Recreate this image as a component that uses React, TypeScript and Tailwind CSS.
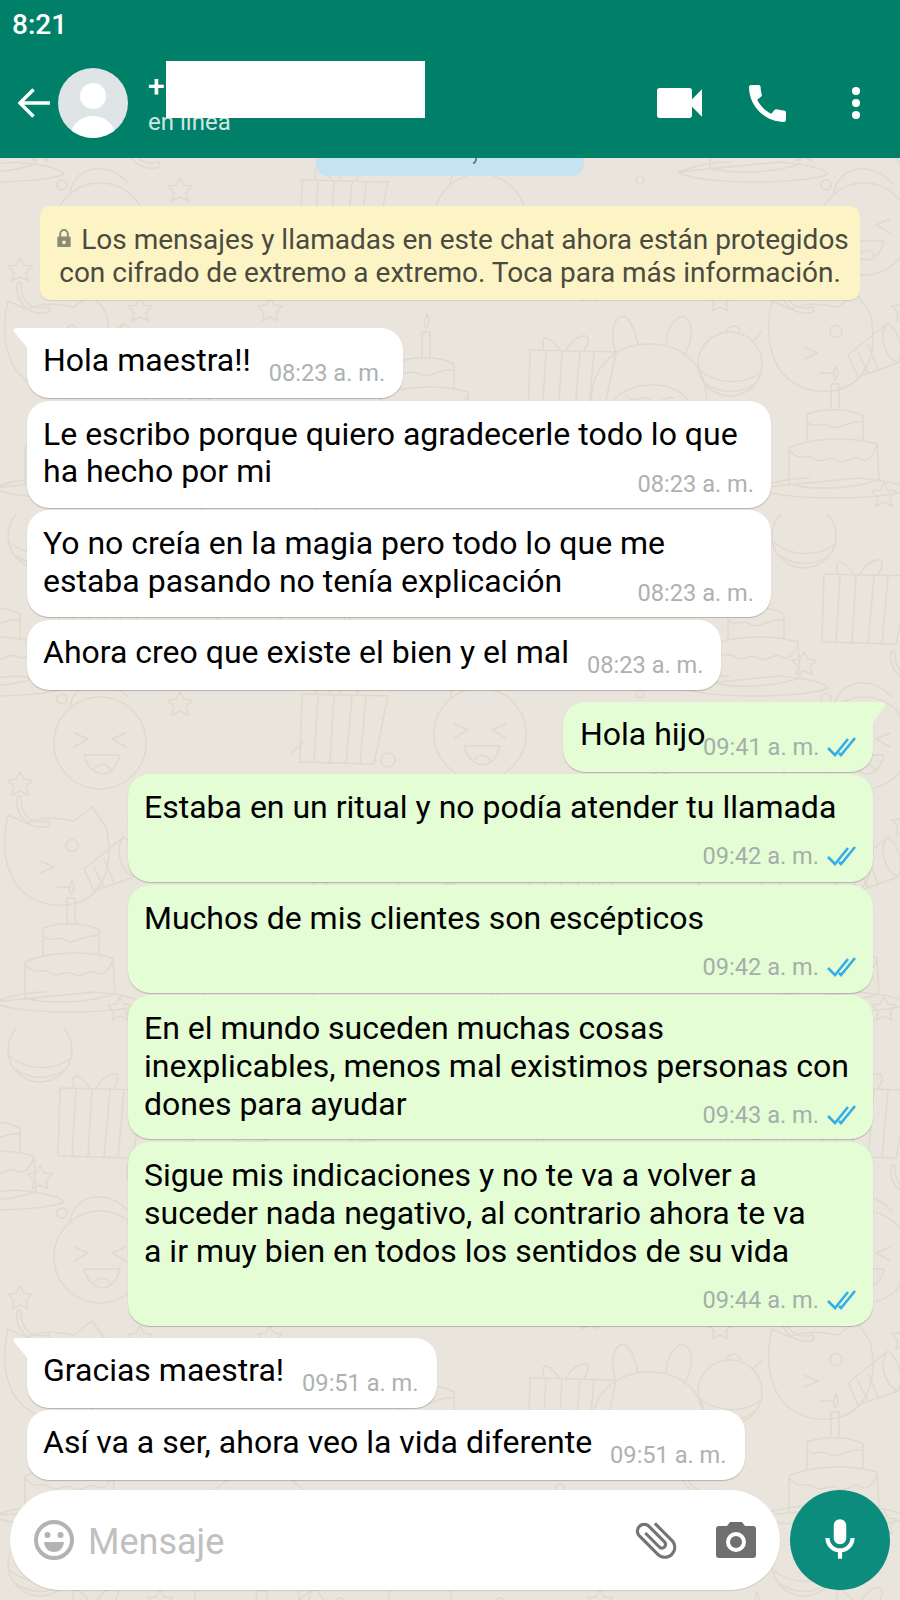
function Doodles() {
  return (
    <svg className="absolute inset-0 h-full w-full" xmlns="http://www.w3.org/2000/svg">
      <defs>
        <path id="star" d="M0-12 4-5 12-4 6 3 8 11 0 7-8 11-6 3-12-4-4-5Z" />
        <path id="moon" d="M-14-10C-14 8-2 16 14 12 16 16 14 18 10 18-6 20-20 6-18-10-18-14-14-14-14-10Z" />
        <g id="cake">
          <path d="M-72 36C-50 28-30 26-20 26M30 26C50 28 75 32 78 38 60 48-50 50-72 36Z" />
          <path d="M-40 32V-4C-20-14 20-16 48-8L50 28C20 38-20 38-40 32Z" />
          <path d="M-40-2C-30 10-24 2-16 6-8 14 0 2 8 8 16 14 24 2 30 6 38 12 44 4 48-6" />
          <path d="M-22-10V-38C-6-44 20-44 34-36V-12" />
          <path d="M-22-30C-14-22-8-32 0-26 8-20 18-32 34-30" />
          <path d="M2-44V-68H10V-44M6-72C2-76 6-82 7-86 10-80 10-76 6-72Z" />
        </g>
        <g id="gift">
          <path d="M-40-30-42 38 32 40 46-28Z" />
          <path d="M-24-28-28 38M-8-28-12 38M10-28 4 40M24-28 18 40" />
          <path d="M-10-30C-24-48-30-44-26-30M-4-30C10-52 26-46 14-30" />
          <circle cx="46" cy="36" r="7" />
        </g>
        <g id="planet">
          <circle r="32" />
          <path d="M-31 6C-14 20 14 22 31 8M-24 20C-8 30 10 30 24 20" />
          <path d="M-4-32C0-40 8-40 10-32M24-24 32-32" />
        </g>
        <g id="cat">
          <path d="M-52-46C-60-12-56 36-8 44 40 48 56 10 46-34L32-54 14-40C-4-44-20-44-34-38Z" />
          <path d="M-20 0-6 6-20 12M18-16A6 6 0 1 0 18-15M-4 26H10" />
          <path d="M24 8 64-24C76-14 80 4 74 16L34 30Z" />
          <path d="M34 6 44 26M44-2 54 22M64-24C54-14 60 10 74 16" />
        </g>
        <g id="face">
          <circle r="46" />
          <path d="M-30-36C-26-62 6-70 28-46M-26-10-12-4-26 4M26-10 12-4 26 4M-16 12C-10 36 14 38 20 12Z" />
          <path d="M-6 26C-2 20 6 20 10 26" />
        </g>
        <g id="bunny">
          <path d="M-58 44C-64-6-32-26 0-26 32-26 62-4 56 44" />
          <path d="M-34-16C-44-48-28-62-20-48-14-38-14-30-12-26M16-26C18-50 34-62 40-46 44-34 38-22 34-14" />
          <path d="M-36 30C-22 12 22 8 38 30M-24 26C-14 36-8 22 0 30 8 38 14 24 24 28" />
        </g>
        <g id="tile" fill="none" stroke="#dfd9ce" strokeWidth="1.5" strokeLinecap="round" strokeLinejoin="round">
          <use href="#face" x="100" y="229" />
          <use href="#cat" x="60" y="347" />
          <use href="#cake" x="65" y="452" />
          <use href="#planet" x="40" y="22" />
          <use href="#gift" x="100" y="90" />
          <use href="#cake" x="-14" y="136" />
          <use href="#cake" x="750" y="136" />
          <use href="#gift" x="570" y="380" />
          <use href="#bunny" x="650" y="370" />
          <use href="#planet" x="730" y="364" />
          <use href="#gift" x="342" y="210" />
          <use href="#face" x="480" y="220" />
          <use href="#cat" x="250" y="70" />
          <use href="#bunny" x="260" y="470" />
          <use href="#planet" x="420" y="60" />
          <use href="#cake" x="420" y="400" />
          <use href="#star" x="160" y="60" />
          <use href="#star" x="40" y="150" />
          <use href="#star" x="140" y="310" />
          <use href="#star" x="180" y="190" />
          <use href="#star" x="120" y="495" />
          <use href="#star" x="270" y="310" />
          <use href="#star" x="320" y="360" />
          <use href="#star" x="430" y="130" />
          <use href="#star" x="600" y="60" />
          <use href="#star" x="660" y="250" />
          <use href="#star" x="720" y="300" />
          <use href="#star" x="540" y="120" />
          <use href="#star" x="20" y="270" />
          <use href="#star" x="590" y="290" />
          <use href="#star" x="200" y="400" />
          <use href="#moon" x="145" y="150" />
          <use href="#moon" x="35" y="295" />
          <use href="#moon" x="360" y="100" />
          <use href="#moon" x="610" y="225" />
          <use href="#moon" x="700" y="450" />
          <use href="#moon" x="510" y="480" />
          <circle cx="62" cy="185" r="5" />
          <circle cx="210" cy="270" r="5" />
          <circle cx="150" cy="400" r="5" />
          <circle cx="300" cy="140" r="5" />
          <circle cx="380" cy="280" r="5" />
          <circle cx="560" cy="150" r="5" />
          <circle cx="700" cy="70" r="5" />
          <circle cx="620" cy="290" r="5" />
          <circle cx="190" cy="110" r="4" />
          <circle cx="340" cy="60" r="4" />
          <circle cx="500" cy="60" r="4" />
          <circle cx="640" cy="180" r="4" />
          <circle cx="310" cy="400" r="4" />
          <circle cx="560" cy="460" r="4" />
          <path d="M470 30 482 18M215 130 230 145M640 130 655 115M290 240 304 228M230 350 240 365" />
        </g>
        <pattern id="wallpaper" x="0" y="-158" width="764" height="514" patternUnits="userSpaceOnUse">
          <use href="#tile" />
        </pattern>
      </defs>
      <rect width="100%" height="100%" fill="url(#wallpaper)" />
    </svg>
  );
}

function Ticks() {
  return (
    <svg viewBox="0 0 30 20" className="ml-[8px] h-5 w-[30px] fill-none stroke-[#35ade8] stroke-[2.6]">
      <path d="M1 11 8 18 21 2" />
      <path d="M12 16 14 18 28 1" />
    </svg>
  );
}

function Tail({ out }: { out?: boolean }) {
  if (out) {
    return (
      <svg viewBox="0 0 14 24" className="absolute right-[-13px] top-0 h-6 w-[14px] fill-[#e4fdd5]">
        <path d="M0 0H10C14 0 14 3 12 5L0 22Z" />
      </svg>
    );
  }
  return (
    <svg viewBox="0 0 16 24" className="absolute left-[-14px] top-0 h-6 w-4 fill-white">
      <path d="M16 0H4C0 0 0 3 2 5L16 22Z" />
    </svg>
  );
}

function InRow({ text, time, first, className }: { text: string; time: string; first?: boolean; className?: string }) {
  return (
    <div className={`relative flex h-[70px] w-fit items-start rounded-[22px] bg-white pl-4 pr-[18px] pt-[13px] shadow-[0_1px_1px_rgba(0,0,0,0.22)] ${first ? "rounded-tl-none" : ""} ${className ?? ""}`}>
      {first && <Tail />}
      <span className="text-[32px] leading-[38px] text-black">{text}</span>
      <span className="ml-[18px] mt-[20px] text-[23.6px] leading-[24px] text-[#aeb1b1]">{time}</span>
    </div>
  );
}

function InBlock({ lines, time }: { lines: string[]; time: string }) {
  return (
    <div className="flex h-[107px] w-[744px] flex-col rounded-[22px] bg-white pl-4 pr-[17px] pt-[15px] shadow-[0_1px_1px_rgba(0,0,0,0.22)]">
      {lines.map((line) => (
        <p key={line} className="text-[32px] leading-[37.5px] text-black">{line}</p>
      ))}
      <span className="mt-[-19px] self-end text-[23.6px] leading-[24px] text-[#aeb1b1]">{time}</span>
    </div>
  );
}

function OutBlock({ lines, time, className, timeGap }: { lines: string[]; time: string; className: string; timeGap: string }) {
  return (
    <div className={`ml-[128px] flex w-[745px] flex-col rounded-[22px] bg-[#e4fdd5] pl-4 pr-4 pt-[14px] shadow-[0_1px_1px_rgba(0,0,0,0.22)] ${className}`}>
      {lines.map((line) => (
        <p key={line} className="text-[32px] leading-[38px] text-black">{line}</p>
      ))}
      <div className={`flex items-center self-end ${timeGap}`}>
        <span className="text-[23.6px] leading-[24px] text-[#a5aeaa]">{time}</span>
        <Ticks />
      </div>
    </div>
  );
}

export default function App() {
  return (
    <div className="relative flex h-[1600px] w-[900px] flex-col overflow-hidden bg-[#e9e4dc] font-['Roboto',sans-serif]">
      <header className="relative z-10 h-[158px] shrink-0 bg-[#008069] text-white">
        <div className="px-3 pt-[9px] text-[28px] font-medium leading-[32px]">8:21</div>
        <div className="mt-[27px] flex items-center pl-[18px] pr-[40px]">
          <svg viewBox="0 0 34 32" className="h-8 w-[33px] fill-none stroke-white stroke-[3.6]">
            <path d="M33 16H3M16 2 2 16 16 30" />
          </svg>
          <div className="ml-[7px] flex h-[70px] w-[70px] shrink-0 items-center justify-center overflow-hidden rounded-full bg-[#dfe5e7]">
            <svg viewBox="0 0 70 70" className="h-[70px] w-[70px] fill-white">
              <circle cx="35" cy="28" r="13" />
              <path d="M12 70C12 56 24 48 35 48S58 56 58 70Z" />
            </svg>
          </div>
          <div className="ml-[20px] flex-1">
            <div className="mt-[-3px] text-[30px] font-medium leading-[34px]">+</div>
            <div className="mt-[7px] text-[24px] leading-[24px] text-[#cfe6e0]">en línea</div>
          </div>
          <svg viewBox="3 6 18 12" className="h-[30px] w-[47px] fill-white">
            <path d="M17 10.5V7c0-.55-.45-1-1-1H4c-.55 0-1 .45-1 1v10c0 .55.45 1 1 1h12c.55 0 1-.45 1-1v-3.5l4 4v-11l-4 4z" />
          </svg>
          <svg viewBox="3 3 18 18" className="ml-[46px] h-[37px] w-[37px] fill-white">
            <path d="M20.01 15.38c-1.23 0-2.42-.2-3.53-.56-.35-.12-.74-.03-1.01.24l-1.57 1.97c-2.83-1.35-5.48-3.9-6.89-6.83l1.95-1.66c.27-.28.35-.67.24-1.02-.37-1.11-.56-2.3-.56-3.53 0-.54-.45-.99-.99-.99H4.19C3.65 3 3 3.24 3 3.99 3 13.28 10.73 21 20.01 21c.71 0 .99-.63.99-1.18v-3.45c0-.54-.45-.99-.99-.99z" />
          </svg>
          <div className="ml-[66px] flex flex-col gap-[4px]">
            <span className="h-[8px] w-[8px] rounded-full bg-white" />
            <span className="h-[8px] w-[8px] rounded-full bg-white" />
            <span className="h-[8px] w-[8px] rounded-full bg-white" />
          </div>
        </div>
        <div className="absolute left-[166px] top-[61px] h-[57px] w-[259px] bg-white" />
      </header>

      <div className="relative flex-1">
        <Doodles />
        <main className="relative flex flex-col">
          <div className="mx-auto flex h-[18px] w-[268px] justify-center rounded-b-[12px] bg-[#c6e3f2]">
            <svg viewBox="0 0 6 6" className="ml-[50px] h-[6px] w-[6px] fill-none stroke-[#666] stroke-[1.6]">
              <path d="M4 0C4 3 3 5 1 5" />
            </svg>
          </div>
          <div className="mx-[40px] mt-[30px] h-[94px] rounded-[10px] bg-[#fdf4c5] pt-[17px] text-center text-[28px] leading-[33px] text-[#4b4a3f] shadow-[0_1px_1px_rgba(0,0,0,0.1)]">
            <svg viewBox="0 0 16 20" className="ml-[5px] mr-[9px] inline-block h-[19px] w-[16px] fill-[#8c8a78] align-[1px]">
              <path d="M3 8V5a5 5 0 0 1 10 0v3h1a1 1 0 0 1 1 1v9a1 1 0 0 1-1 1H2a1 1 0 0 1-1-1V9a1 1 0 0 1 1-1Zm2 0h6V5a3 3 0 0 0-6 0Zm3 4a2 2 0 1 0 0 4 2 2 0 0 0 0-4Z" />
            </svg>
            Los mensajes y llamadas en este chat ahora están protegidos
            <br />
            con cifrado de extremo a extremo. Toca para más información.
          </div>

          <div className="mt-[28px] flex flex-col gap-[2.5px] pl-[27px]">
            <InRow first text="Hola maestra!!" time="08:23 a. m." />
            <InBlock lines={["Le escribo porque quiero agradecerle todo lo que", "ha hecho por mi"]} time="08:23 a. m." />
            <InBlock lines={["Yo no creía en la magia pero todo lo que me", "estaba pasando no tenía explicación"]} time="08:23 a. m." />
            <InRow text="Ahora creo que existe el bien y el mal" time="08:23 a. m." />
          </div>

          <div className="mt-[12px] flex flex-col gap-[2.5px]">
            <div className="relative ml-[563px] flex h-[70px] w-[310px] items-start rounded-[22px] rounded-tr-none bg-[#e4fdd5] pl-[17px] pt-[13px] shadow-[0_1px_1px_rgba(0,0,0,0.22)]">
              <Tail out />
              <span className="w-[123px] shrink-0 whitespace-nowrap text-[32px] leading-[38px] text-black">Hola hijo</span>
              <div className="mt-[20px] flex items-center">
                <span className="text-[23.6px] leading-[24px] text-[#a5aeaa]">09:41 a. m.</span>
                <Ticks />
              </div>
            </div>
            <OutBlock className="h-[108px]" timeGap="mt-[18px]" lines={["Estaba en un ritual y no podía atender tu llamada"]} time="09:42 a. m." />
            <OutBlock className="h-[108px]" timeGap="mt-[18px]" lines={["Muchos de mis clientes son escépticos"]} time="09:42 a. m." />
            <OutBlock
              className="h-[144px]"
              timeGap="mt-[-20px]"
              lines={["En el mundo suceden muchas cosas", "inexplicables, menos mal existimos personas con", "dones para ayudar"]}
              time="09:43 a. m."
            />
            <OutBlock
              className="h-[184px]"
              timeGap="mt-[18px]"
              lines={["Sigue mis indicaciones y no te va a volver a", "suceder nada negativo, al contrario ahora te va", "a ir muy bien en todos los sentidos de su vida"]}
              time="09:44 a. m."
            />
          </div>

          <div className="mt-[12px] flex flex-col gap-[2.5px] pl-[27px]">
            <InRow first text="Gracias maestra!" time="09:51 a. m." />
            <InRow text="Así va a ser, ahora veo la vida diferente" time="09:51 a. m." />
          </div>
        </main>

        <footer className="absolute bottom-[10px] left-[10px] flex items-center gap-[10px]">
          <div className="flex h-[100px] w-[770px] items-center rounded-full bg-white pl-[24px] pr-[24px] shadow-[0_1px_1px_rgba(0,0,0,0.12)]">
            <svg viewBox="0 0 40 40" className="h-10 w-10 shrink-0">
              <circle cx="20" cy="20" r="18" fill="none" stroke="#b3b3b3" strokeWidth="4" />
              <circle cx="13.5" cy="15" r="3" fill="#b3b3b3" />
              <circle cx="26.5" cy="15" r="3" fill="#b3b3b3" />
              <path d="M10 22H30C29 29 25 32 20 32S11 29 10 22Z" fill="#b3b3b3" />
            </svg>
            <span className="ml-[14px] mt-[3px] flex-1 text-[36px] text-[#c0c0c0]">Mensaje</span>
            <svg viewBox="0 0 24 24" className="h-[50px] w-[50px] -rotate-45 fill-[#757575]">
              <path d="M16.5 6v11.5c0 2.21-1.79 4-4 4s-4-1.79-4-4V5c0-1.38 1.12-2.5 2.5-2.5s2.5 1.12 2.5 2.5v10.5c0 .55-.45 1-1 1s-1-.45-1-1V6H10v9.5c0 1.38 1.12 2.5 2.5 2.5s2.5-1.12 2.5-2.5V5c0-2.21-1.79-4-4-4S7 2.79 7 5v12.5c0 3.04 2.46 5.5 5.5 5.5s5.5-2.46 5.5-5.5V6h-1.5z" />
            </svg>
            <svg viewBox="0 0 40 36" className="ml-[35px] h-9 w-10 fill-[#6f6f6f]">
              <path fillRule="evenodd" d="M3 4h8l3-4h12l3 4h8a3 3 0 0 1 3 3v26a3 3 0 0 1-3 3H3a3 3 0 0 1-3-3V7a3 3 0 0 1 3-3Zm17 6a10 10 0 1 0 0 20 10 10 0 0 0 0-20Zm0 4a6 6 0 1 1 0 12 6 6 0 0 1 0-12Z" />
            </svg>
          </div>
          <div className="flex h-[100px] w-[100px] items-center justify-center rounded-full bg-[#0b8c7d]">
            <svg viewBox="0 0 24 24" className="h-[50px] w-[50px] fill-white">
              <path d="M12 14c1.66 0 3-1.34 3-3V5c0-1.66-1.34-3-3-3S9 3.34 9 5v6c0 1.66 1.34 3 3 3zm5-3c0 2.76-2.24 5-5 5s-5-2.24-5-5H5c0 3.53 2.61 6.43 6 6.92V21h2v-3.08c3.39-.49 6-3.39 6-6.92h-2z" />
            </svg>
          </div>
        </footer>
      </div>
    </div>
  );
}
